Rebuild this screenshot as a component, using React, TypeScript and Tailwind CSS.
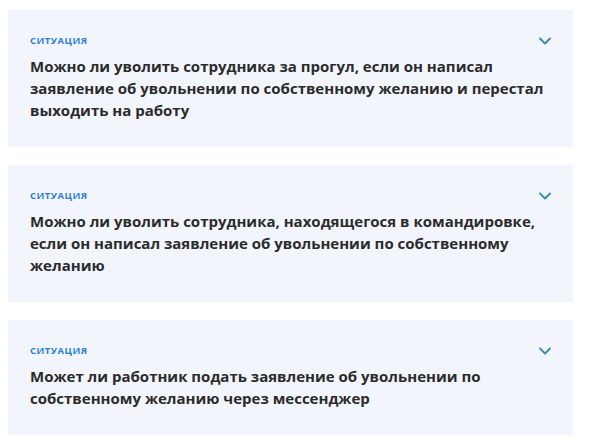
import { ChevronDown } from 'lucide-react';

interface Situation {
  lines: string[];
}

const SITUATIONS: Situation[] = [
  {
    lines: [
      'Можно ли уволить сотрудника за прогул, если он написал',
      'заявление об увольнении по собственному желанию и перестал',
      'выходить на работу',
    ],
  },
  {
    lines: [
      'Можно ли уволить сотрудника, находящегося в командировке,',
      'если он написал заявление об увольнении по собственному',
      'желанию',
    ],
  },
  {
    lines: [
      'Может ли работник подать заявление об увольнении по',
      'собственному желанию через мессенджер',
    ],
  },
];

function SituationCard({ lines }: Situation) {
  return (
    <div className="flex items-start bg-[#f2f6fc] pl-[22px] pr-[18px] pt-[25px] pb-[26px]">
      <div className="flex min-w-0 flex-1 flex-col gap-[8px]">
        <div className="text-[9.5px] leading-[12px] font-bold tracking-[0.05em] text-[#2b7fd6]">
          СИТУАЦИЯ
        </div>
        <div className="text-[15px] leading-[22px] font-bold text-[#2b2b2b]">
          {lines.map((line, i) => (
            <div key={i} className="whitespace-nowrap">
              {line}
            </div>
          ))}
        </div>
      </div>
      <ChevronDown className="-mt-[4px] h-[20px] w-[20px] shrink-0 text-[#3589b3]" strokeWidth={2.2} />
    </div>
  );
}

export default function App() {
  return (
    <div className="min-h-[442px] bg-white pl-[8px] pr-[27px] pt-[10px] font-['Open_Sans','Lato',sans-serif]">
      <div className="flex flex-col gap-[18px]">
        {SITUATIONS.map((s, i) => (
          <SituationCard key={i} lines={s.lines} />
        ))}
      </div>
    </div>
  );
}
